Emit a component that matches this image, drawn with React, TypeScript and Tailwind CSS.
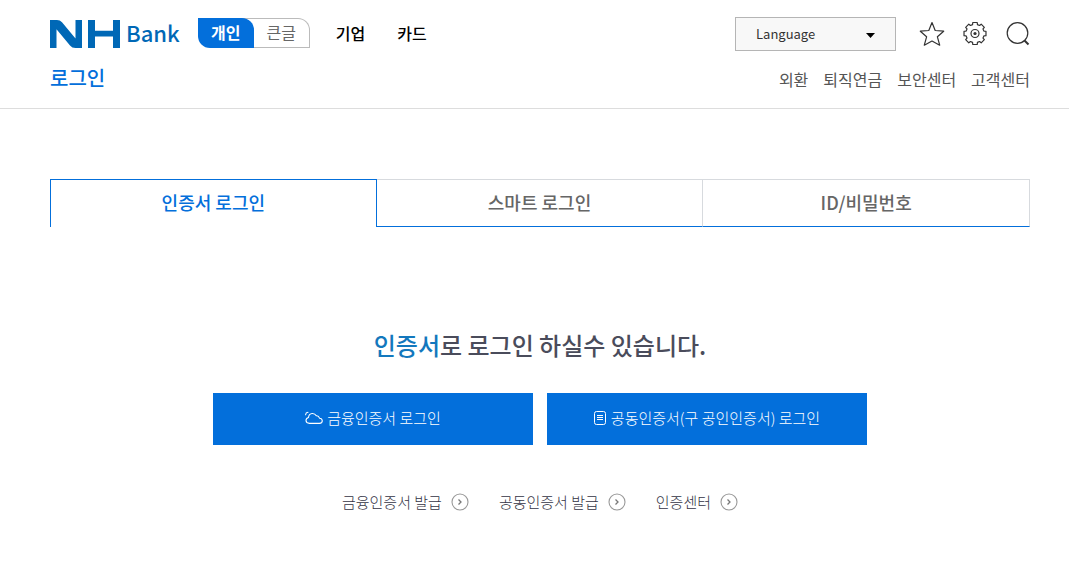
import React, { useState } from "react";

const kr = "font-['Noto_Sans_CJK_KR','Noto_Sans',sans-serif]";

function Logo() {
  return (
    <a href="#home" aria-label="NH Bank" className="flex h-7 items-center gap-1.5 text-[#0068b6]">
      <svg width="70" height="28" viewBox="0 0 70 28" fill="currentColor" aria-hidden="true">
        <path d="M0 0H7Q10 0 12 2.300L25.500 18.500V0H32V28H25.500Q22 28 20 25.500L6.500 9.200V28H0Z" />
        <path d="M38 0H45V10.700H63V0H70V28H63V16.500H45V28H38Z" />
      </svg>
      <span className="pb-1 text-[22px] leading-7 font-medium">Bank</span>
    </a>
  );
}

function StarIcon() {
  return (
    <svg width="26" height="26" viewBox="0 0 26 26" fill="none" stroke="#333" strokeWidth="1.200" strokeLinejoin="round" aria-hidden="true">
      <path d="M13 1.500L16.200 9.500L24.700 10.200L18.400 15.800L20.700 24.200L13 20L5.300 24.200L7.600 15.800L1.300 10.200L9.800 9.500Z" />
    </svg>
  );
}

function GearIcon() {
  const teeth = Array.from({ length: 8 }, (_, i) => {
    const c = (i * Math.PI) / 4;
    const at = (r: number, d: number) =>
      `${(13 + r * Math.cos(c + d)).toFixed(2)} ${(12.5 + r * Math.sin(c + d)).toFixed(2)}`;
    return `${i === 0 ? "M" : "L"}${at(9.2, -0.27)}L${at(11.2, -0.2)}L${at(11.2, 0.2)}L${at(9.2, 0.27)}`;
  }).join("");
  return (
    <svg width="26" height="26" viewBox="0 0 26 26" fill="none" stroke="#333" strokeWidth="1.200" strokeLinejoin="round" aria-hidden="true">
      <path d={`${teeth}Z`} />
      <circle cx="13" cy="12.500" r="4" />
      <circle cx="13" cy="12.500" r="1.600" fill="#333" stroke="none" />
    </svg>
  );
}

function SearchIcon() {
  return (
    <svg width="25" height="26" viewBox="0 0 25 26" fill="none" stroke="#333" aria-hidden="true">
      <circle cx="12.500" cy="12" r="10.300" strokeWidth="1.200" />
      <path d="M19.500 19.500L23.500 23.500" strokeWidth="2" />
    </svg>
  );
}

function CloudIcon() {
  return (
    <svg width="18" height="14" viewBox="0 0 18 14" fill="none" stroke="#fff" strokeWidth="1.100" strokeLinecap="round" strokeLinejoin="round" aria-hidden="true">
      <path d="M4.500 12.400H14.500Q17.300 12.200 17.300 9.700Q17 7.300 14.500 7.200Q13.700 4.500 11.300 4.800Q10 2.400 7.200 2.500Q3.800 2.900 3.500 6.500Q1 7.200 1 9.500Q1.200 12.200 4.500 12.400Z" />
      <path d="M.6 3.800Q.8 1.500 3 1.300" />
    </svg>
  );
}

function DocumentIcon() {
  return (
    <svg width="13" height="14" viewBox="0 0 13 14" fill="none" stroke="#fff" aria-hidden="true">
      <rect x=".5" y=".5" width="11" height="13" rx="2" />
      <path d="M3 4.500h6M3 6.500h6M3 8.500h6" />
    </svg>
  );
}

function ArrowCircle() {
  return (
    <svg width="18" height="18" viewBox="0 0 18 18" fill="none" aria-hidden="true">
      <circle cx="9" cy="9" r="8" stroke="#999" strokeWidth="1.100" />
      <path d="M7.500 6.500L10 9L7.500 11.500" stroke="#777" strokeWidth="1.300" />
    </svg>
  );
}

const serviceLinks = ["외환", "퇴직연금", "보안센터", "고객센터"];
const tabs = ["인증서 로그인", "스마트 로그인", "ID/비밀번호"];
const certLinks = ["금융인증서 발급", "공동인증서 발급", "인증센터"];

export default function App() {
  const [tab, setTab] = useState(0);
  return (
    <div className={`${kr} bg-white text-[#333]`}>
      <header className="flex h-[109px] items-start justify-between border-b border-[#ddd] pr-[39px] pl-[50px]">
        <div>
          <div className="flex items-center pt-[18px]">
            <div className="pt-0.5">
              <Logo />
            </div>
            <div className="ml-[18px] flex h-[30px] w-28 text-base">
              <button type="button" className="z-10 flex w-14 items-center justify-center rounded-tr-xl rounded-bl-xl bg-[#036fdb] pb-0.5 font-bold text-white">개인</button>
              <button type="button" className="-ml-3 flex grow items-center justify-center rounded-tr-xl border border-l-0 border-[#bbb] pb-0.5 pl-3 text-[#666]">큰글</button>
            </div>
            <nav className="ml-[26px] flex gap-8 text-base font-medium text-black">
              <a href="#business">기업</a>
              <a href="#card">카드</a>
            </nav>
          </div>
          <h1 className="mt-4 text-xl leading-7 font-medium text-[#036fdb]">로그인</h1>
        </div>
        <div className="flex flex-col items-end pt-[17px]">
          <div className="flex items-center">
            <div className="relative">
              <select aria-label="Language" className="h-[34px] w-[161px] appearance-none border border-[#b5b5b5] bg-[#f8f8f8] pl-5 text-[13px] text-[#333]">
                <option>Language</option>
              </select>
              <svg className="pointer-events-none absolute top-4 right-[21px]" width="9" height="5" viewBox="0 0 9 5" aria-hidden="true">
                <path d="M0 0h9L4.500 5Z" />
              </svg>
            </div>
            <div className="ml-[23px] flex gap-[17px]">
              <button type="button" aria-label="즐겨찾기"><StarIcon /></button>
              <button type="button" aria-label="설정"><GearIcon /></button>
              <button type="button" aria-label="검색"><SearchIcon /></button>
            </div>
          </div>
          <nav className="mt-4 flex gap-[15px] text-base leading-6 text-[#555]">
            {serviceLinks.map((label) => (
              <a key={label} href="#service">{label}</a>
            ))}
          </nav>
        </div>
      </header>

      <main className="pt-[70px] pr-[39px] pl-[50px]">
        <div role="tablist" className="grid h-12 grid-cols-3">
          {tabs.map((label, i) => (
            <button
              key={label}
              type="button"
              role="tab"
              aria-selected={tab === i}
              onClick={() => setTab(i)}
              className={
                tab === i
                  ? "border border-b-0 border-[#036fdb] pb-[3px] text-lg font-medium text-[#036fdb]"
                  : "border-t border-r border-b border-t-[#d7dade] border-r-[#d7dade] border-b-[#036fdb] pb-0.5 text-lg font-medium text-[#666]"
              }
            >
              {label}
            </button>
          ))}
        </div>

        <h2 className="mt-[100px] text-center text-2xl leading-9 font-medium text-[#4a4c5b]">
          <span className="text-[#1378bd]">인증서</span>로 로그인 하실수 있습니다.
        </h2>

        <div className="mt-[30px] flex justify-center gap-3.5 text-[15px] font-light text-white">
          <button type="button" className="flex h-[52px] w-80 items-center justify-center gap-1 bg-[#036fdb] pb-0.5">
            <CloudIcon />금융인증서 로그인
          </button>
          <button type="button" className="flex h-[52px] w-80 items-center justify-center gap-1 bg-[#036fdb] pb-0.5">
            <DocumentIcon />공동인증서(구 공인인증서) 로그인
          </button>
        </div>

        <div className="mt-[46px] flex justify-center gap-[30px] pb-[52px] text-[15px] leading-[22px] font-light text-[#333344]">
          {certLinks.map((label) => (
            <a key={label} href="#certificate" className="flex items-center gap-[9px]">
              {label}
              <ArrowCircle />
            </a>
          ))}
        </div>
      </main>
    </div>
  );
}
